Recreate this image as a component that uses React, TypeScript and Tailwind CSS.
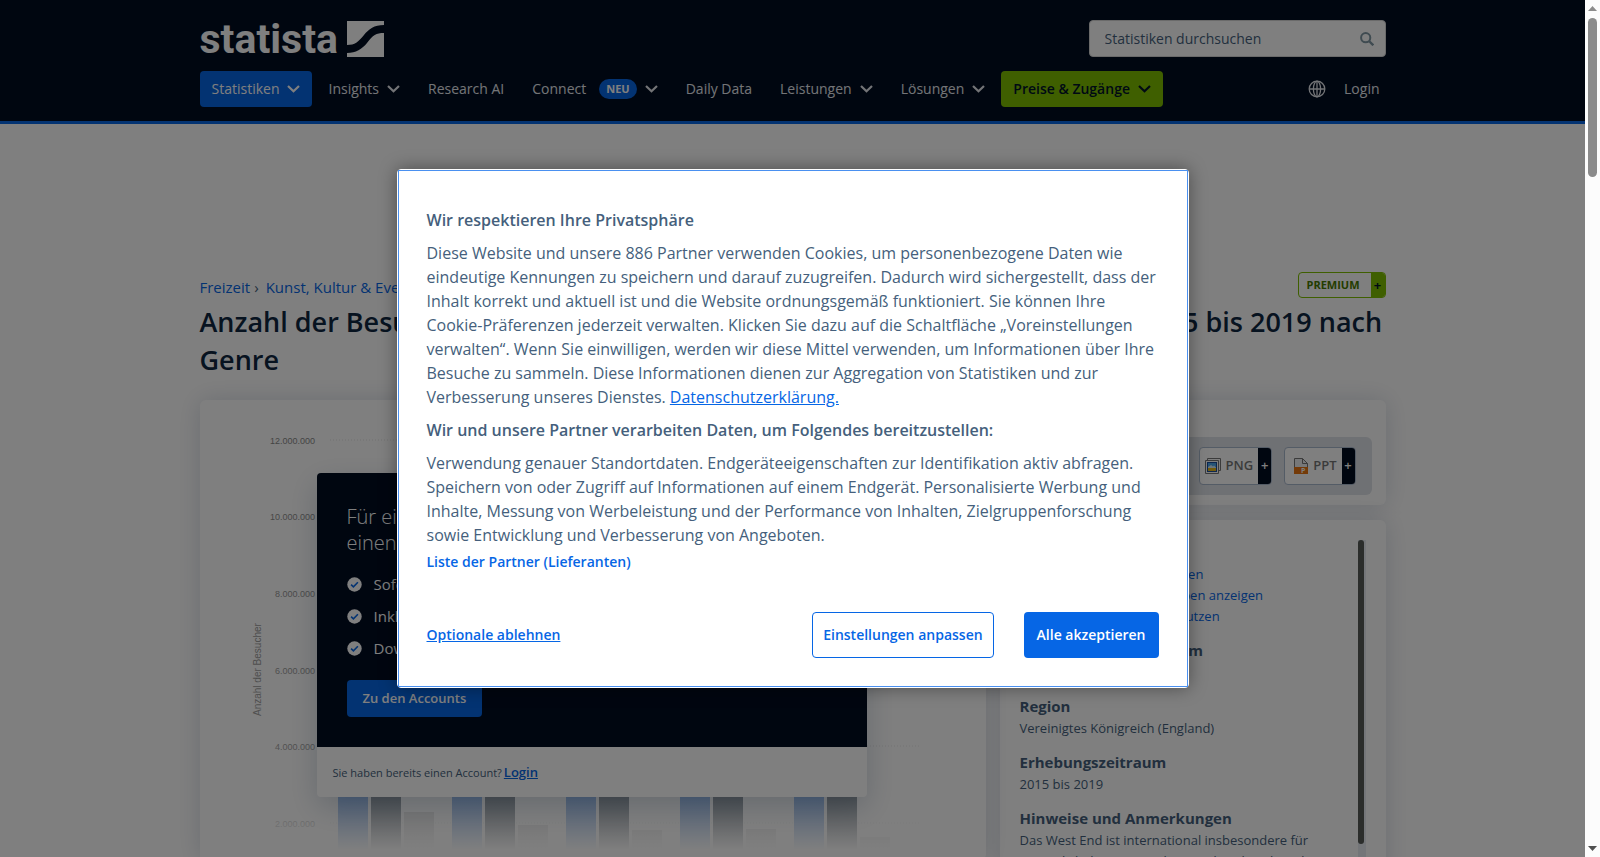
import React from "react";
import clsx from "clsx";

const navItems = [
  { label: "Statistiken", chevron: true, className: "bg-[#0666e5] text-white" },
  { label: "Insights", chevron: true },
  { label: "Research AI" },
  { label: "Connect", chevron: true, badge: "NEU" },
  { label: "Daily Data" },
  { label: "Leistungen", chevron: true },
  { label: "Lösungen", chevron: true },
  { label: "Preise & Zugänge", chevron: true, className: "bg-[#7ebf00] font-semibold text-[#001327]" },
];

const details = [
  { title: "Veröffentlichungsdatum", text: "Januar 2020" },
  { title: "Region", text: "Vereinigtes Königreich (England)" },
  { title: "Erhebungszeitraum", text: "2015 bis 2019" },
  {
    title: "Hinweise und Anmerkungen",
    text: "Das West End ist international insbesondere für Musicals bekannt. Daneben wird auch viel modernes Theater gespielt.",
  },
];

const ticks = [
  { label: "12.000.000", y: 41 },
  { label: "10.000.000", y: 117 },
  { label: "8.000.000", y: 194 },
  { label: "6.000.000", y: 271 },
  { label: "4.000.000", y: 347 },
  { label: "2.000.000", y: 424 },
];

// x of each year group and the top of its smallest bar
const groups = [
  { x: 138, top: 412 },
  { x: 252, top: 425 },
  { x: 366, top: 430 },
  { x: 480, top: 429 },
  { x: 594, top: 437 },
];

const Chevron = () => (
  <svg width="13" height="8" viewBox="0 0 13 8" fill="none" stroke="currentColor" strokeWidth="2.2">
    <path d="M1 1l5.500 5.300L12 1" />
  </svg>
);

const Logo = () => (
  <a href="#" aria-label="statista" className="flex h-9 items-center gap-[9px] text-white">
    <span className="font-[Roboto,sans-serif] text-[41px] leading-9 font-bold">statista</span>
    <svg width="37" height="36" viewBox="0 0 37 36" fill="currentColor">
      <path d="M0 0H37V4C27 4 22 8 17 14C11 21 8 24 0 24Z" />
      <path d="M37 12V36H0V32C9 32 15 28 20 22C26 14 29 12 37 12Z" />
    </svg>
  </a>
);

const Header = () => (
  <header className="border-b-[3px] border-[#0666e5] bg-[#000c20] pt-5 pb-[14px]">
    <div className="mx-auto max-w-[1186px]">
      <div className="flex items-center justify-between">
        <Logo />
        <form className="flex h-[37px] w-[297px] items-center rounded-sm border border-[#d5d5d5] bg-white pr-[11px] pl-[15px]">
          <input
            type="search"
            aria-label="Statistiken durchsuchen"
            placeholder="Statistiken durchsuchen"
            className="min-w-0 flex-1 text-sm text-[#455f7c] outline-none placeholder:text-[#455f7c]"
          />
          <button type="submit" aria-label="Suchen" className="text-[#7f97a3]">
            <svg width="14" height="14" viewBox="0 0 14 14" fill="none" stroke="currentColor" strokeWidth="2">
              <circle cx="5.7" cy="5.7" r="4.6" />
              <path d="M9 9l4.3 4.3" strokeWidth="2.4" />
            </svg>
          </button>
        </form>
      </div>
      <nav className="mt-[14px] flex items-center gap-1 text-sm text-[#e6e9ee]">
        {navItems.map((item) => (
          <button
            key={item.label}
            className={clsx("flex h-9 items-center gap-2 rounded-sm px-3 whitespace-nowrap", item.className)}
          >
            {item.label}
            {item.badge && (
              <span className="ml-[5px] rounded-full bg-[#0666e5] px-[7px] text-[11px] leading-5 font-bold text-white">
                {item.badge}
              </span>
            )}
            {item.chevron && <Chevron />}
          </button>
        ))}
        <button aria-label="Sprache" className="ml-auto">
          <svg width="18" height="18" viewBox="0 0 18 18" fill="none" stroke="currentColor" strokeWidth="1.3">
            <circle cx="9" cy="9" r="7.8" />
            <ellipse cx="9" cy="9" rx="3.6" ry="7.8" />
            <path d="M1.2 9h15.6M9 1.2v15.6" />
          </svg>
        </button>
        <a href="#" className="ml-2 px-[6px]">
          Login
        </a>
      </nav>
    </div>
  </header>
);

const Chart = () => (
  <svg width="785" height="460" viewBox="0 0 785 460" className="block" fontFamily="Liberation Sans, sans-serif">
    <defs>
      <linearGradient id="fade" x1="0" y1="0" x2="0" y2="1">
        <stop offset="0" stopColor="#fff" stopOpacity="0.1" />
        <stop offset="0.85" stopColor="#fff" stopOpacity="0.35" />
        <stop offset="1" stopColor="#fff" />
      </linearGradient>
    </defs>
    {ticks.map((tick) => (
      <g key={tick.label}>
        <text x="115" y={tick.y + 3} textAnchor="end" fontSize="9" fill="#777">
          {tick.label}
        </text>
        <path d={`M130 ${tick.y - 1}H720`} stroke="#ddd" strokeDasharray="1 2" />
      </g>
    ))}
    <text transform="translate(61 316) rotate(-90)" fontSize="10" fill="#777">
      Anzahl der Besucher
    </text>
    {groups.map((group) => (
      <g key={group.x}>
        <rect x={group.x} y="100" width="30" height="360" fill="#4a88df" />
        <rect x={group.x + 33} y="150" width="30" height="310" fill="#33424f" />
        <rect x={group.x + 66} y={group.top} width="30" height="60" fill="#c8c8c8" />
      </g>
    ))}
    <rect y="0" width="785" height="450" fill="url(#fade)" />
    <rect y="450" width="785" height="10" fill="#fff" />
  </svg>
);

const AccountTeaser = () => (
  <div className="absolute top-[73px] left-[117px] w-[550px] overflow-hidden rounded-sm bg-white shadow-[0_10px_30px_rgba(0,39,80,0.2)]">
    <div className="bg-[#000c20] px-[30px] pt-[31px] pb-[30px] text-white">
      <h2 className="text-xl leading-[26px] font-light">
        Für einen uneingeschränkten Zugang benötigen Sie
        <br />
        einen Account
      </h2>
      <ul className="mt-3 text-[15px] leading-8">
        {["Sofortiger Zugriff auf Statistiken", "Inklusive Quellenangaben", "Download in allen Formaten"].map((text) => (
          <li key={text} className="flex items-center gap-3">
            <svg width="15" height="15" viewBox="0 0 15 15" fill="none">
              <circle cx="7.5" cy="7.5" r="7.2" fill="#fff" />
              <path d="M4.1 7.7l2.3 2.2 4.5-4.7" stroke="#0666e5" strokeWidth="1.6" />
            </svg>
            {text}
          </li>
        ))}
      </ul>
      <button className="mt-4 h-[37px] rounded-sm bg-[#0666e5] px-4 text-[13px] font-semibold">
        Zu den Accounts
      </button>
    </div>
    <p className="flex h-[50px] items-center gap-[2px] px-4 pt-[2px] text-[11px] text-[#455f7c]">
      Sie haben bereits einen Account?
      <a href="#" className="text-[13px] font-semibold text-[#0666e5] underline">
        Login
      </a>
    </p>
  </div>
);

const PictureIcon = () => (
  <svg width="16" height="16" viewBox="0 0 16 16" fill="none">
    <path d="M2.5 .5h13v12h-13z" fill="#fff" stroke="#777" />
    <path d="M.5 2.5h13v13H.5z" fill="#fff" stroke="#777" />
    <path d="M2 4h10v10H2z" fill="#1d4f9e" />
    <path d="M3 5h8v5H3z" fill="#4aa8ee" />
    <path d="M3 9l3-2 2 1.500 1-1 2 2V10H3z" fill="#d9edf8" />
    <path d="M3 10h8v3H3z" fill="#e8b818" />
  </svg>
);

const SlidesIcon = () => (
  <svg width="14" height="16" viewBox="0 0 14 16" fill="none">
    <path d="M.5 .5h8l5 5v10H.5z" fill="#eef0f2" stroke="#777" />
    <path d="M8.500 .5v5h5" stroke="#777" />
    <path d="M0 9h14v7H0z" fill="#e87511" />
    <text x="7" y="15" fontSize="7" fontWeight="700" fill="#fff">
      P
    </text>
  </svg>
);

const downloads = [
  { label: "PDF", icon: <SlidesIcon />, className: "pl-[9px]" },
  { label: "XLS", icon: <SlidesIcon />, className: "pl-[9px]" },
  { label: "PNG", icon: <PictureIcon />, className: "pl-[5px]" },
  { label: "PPT", icon: <SlidesIcon />, className: "pl-[9px]" },
];

const Downloads = () => (
  <section className="rounded-md bg-white px-[14px] pt-[37px] pb-[10px] shadow-[0_0_25px_rgba(0,39,80,0.16)]">
    <div className="flex h-[58px] items-center justify-end gap-3 rounded-md bg-[#dfe2e8] pr-4">
      {downloads.map((item) => (
        <button
          key={item.label}
          className={clsx(
            "flex h-[38px] items-center gap-[5px] overflow-hidden rounded-sm border border-[#a9b8cd] bg-white text-[13px] font-semibold text-[#777]",
            item.className
          )}
        >
          {item.icon}
          {item.label}
          <span className="flex h-full w-[13px] items-center justify-center bg-[#000c20] text-white">+</span>
        </button>
      ))}
    </div>
  </section>
);

const Details = () => (
  <section className="flex h-[360px] items-start rounded-md bg-white p-5 shadow-[0_0_25px_rgba(0,39,80,0.16)]">
    <div className="flex-1 text-[13px] leading-[21px] text-[#455f7c]">
      <h3 className="text-[15px] font-bold">Quelle</h3>
      <ul className="mt-[3px] mb-[13px] pl-[10px] text-[#0666e5]">
        <li>
          <a href="#">→ Quellenangaben anzeigen</a>
        </li>
        <li>
          <a href="#">→ Veröffentlichungsangaben anzeigen</a>
        </li>
        <li>
          <a href="#">→ Premium-Funktionen nutzen</a>
        </li>
      </ul>
      {details.map((item) => (
        <div key={item.title} className="mb-[13px]">
          <h3 className="text-[15px] font-bold">{item.title}</h3>
          <p className="mt-px">{item.text}</p>
        </div>
      ))}
    </div>
    <div className="h-[340px] w-2 bg-[#e9edf3]">
      <div className="h-[304px] w-[6px] rounded-full bg-[#565a56]" />
    </div>
  </section>
);

const ConsentDialog = () => (
  <div
    role="dialog"
    aria-modal="true"
    aria-labelledby="consent-title"
    className="w-[792px] rounded-sm border border-white bg-white shadow-[0_0_18px_rgba(0,0,0,0.4)]"
  >
    <div className="border border-[#4a90f0] px-7 pt-[37px] pb-7 text-[#455f7c]">
      <h2 id="consent-title" className="leading-6 font-semibold">
        Wir respektieren Ihre Privatsphäre
      </h2>
      <p className="mt-[9px] leading-6">
        Diese Website und unsere 886 Partner verwenden Cookies, um personenbezogene Daten wie eindeutige Kennungen zu
        speichern und darauf zuzugreifen. Dadurch wird sichergestellt, dass der Inhalt korrekt und aktuell ist und die
        Website ordnungsgemäß funktioniert. Sie können Ihre Cookie-Präferenzen jederzeit verwalten. Klicken Sie dazu auf
        die Schaltfläche „Voreinstellungen verwalten“. Wenn Sie einwilligen, werden wir diese Mittel verwenden, um
        Informationen über Ihre Besuche zu sammeln. Diese Informationen dienen zur Aggregation von Statistiken und zur
        Verbesserung unseres Dienstes.{" "}
        <a href="#" className="text-[#0666e5] underline">
          Datenschutzerklärung.
        </a>
      </p>
      <h2 className="mt-[9px] leading-6 font-semibold">
        Wir und unsere Partner verarbeiten Daten, um Folgendes bereitzustellen:
      </h2>
      <p className="mt-[9px] leading-6">
        Verwendung genauer Standortdaten. Endgeräteeigenschaften zur Identifikation aktiv abfragen. Speichern von oder
        Zugriff auf Informationen auf einem Endgerät. Personalisierte Werbung und Inhalte, Messung von Werbeleistung und
        der Performance von Inhalten, Zielgruppenforschung sowie Entwicklung und Verbesserung von Angeboten.
      </p>
      <button className="mt-[3px] block text-sm leading-6 font-semibold text-[#0666e5]">
        Liste der Partner (Lieferanten)
      </button>
      <div className="mt-[38px] flex items-center gap-[30px] text-sm font-semibold">
        <button className="mr-auto text-[#0666e5] underline">Optionale ablehnen</button>
        <button className="h-[46px] rounded-sm border border-[#0666e5] px-[10px] text-[#0666e5]">
          Einstellungen anpassen
        </button>
        <button className="h-[46px] rounded-sm bg-[#0666e5] px-[13px] text-white">Alle akzeptieren</button>
      </div>
    </div>
  </div>
);

const ScrollRail = () => (
  <div className="flex w-[15px] shrink-0 flex-col items-center justify-between bg-[#fcfcfc] py-[6px]">
    <div className="flex flex-col items-center gap-[7px]">
      <svg width="9" height="5" viewBox="0 0 9 5" fill="#8b8b8b">
        <path d="M4.500 0L9 5H0z" />
      </svg>
      <div className="h-[159px] w-[9px] rounded-full bg-[#8b8b8b]" />
    </div>
    <svg width="9" height="5" viewBox="0 0 9 5" fill="#505050">
      <path d="M4.500 5L9 0H0z" />
    </svg>
  </div>
);

export default function App() {
  return (
    <div className="flex h-screen overflow-hidden bg-white font-['Open_Sans',sans-serif]">
      <div className="relative min-w-0 flex-1 overflow-hidden">
        <Header />
        <main className="mx-auto max-w-[1186px] pt-[148px]">
          <div className="flex items-start justify-between">
            <nav className="mt-[3px] text-[15px] leading-6 text-[#0666e5]">
              <a href="#">Freizeit</a>
              <span className="mr-[7px] ml-1 text-[#455f7c]">›</span>
              <a href="#">Kunst, Kultur &amp; Events</a>
            </nav>
            <div className="flex h-[26px] w-[88px] overflow-hidden rounded-sm border border-[#7ebf00] text-[11px] leading-6 font-bold">
              <span className="flex-1 pl-2 text-[#487a00]">PREMIUM</span>
              <span className="w-[14px] bg-[#7ebf00] text-center text-[13px] text-[#001327]">+</span>
            </div>
          </div>
          <h1 className="mt-1 text-[27px] leading-[38px] font-semibold text-[#0f2741]">
            Anzahl der Besucher von Theatern im Londoner West End in den Jahren 2015 bis 2019 nach Genre
          </h1>
          <div className="mt-[21px] flex items-start gap-[14px]">
            <section className="relative min-w-0 flex-1 rounded-md bg-white shadow-[0_0_25px_rgba(0,39,80,0.16)]">
              <Chart />
              <AccountTeaser />
            </section>
            <div className="flex w-[386px] flex-col gap-[15px]">
              <Downloads />
              <Details />
            </div>
          </div>
        </main>
        <div className="absolute inset-0 flex items-center justify-center bg-black/50">
          <ConsentDialog />
        </div>
      </div>
      <ScrollRail />
    </div>
  );
}
